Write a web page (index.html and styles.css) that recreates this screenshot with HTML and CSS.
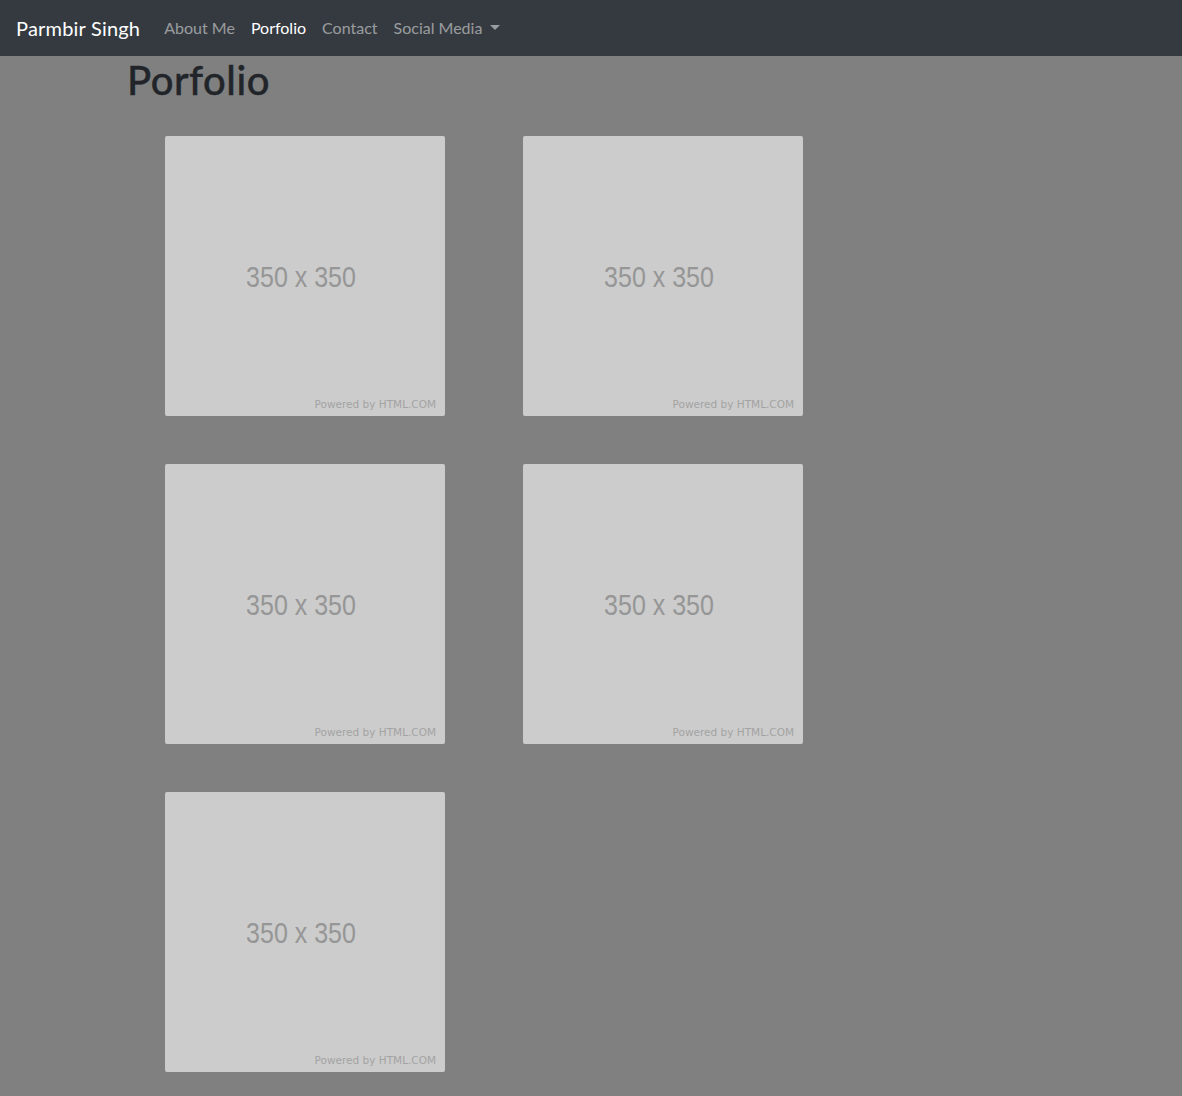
FILE: index.html
```html
<!DOCTYPE html>
<html lang="en">
<head>
<meta charset="utf-8">
<title>Porfolio</title>
<link rel="stylesheet" href="styles.css">
</head>
<body>
<nav class="navbar">
  <a class="brand" href="#">Parmbir Singh</a>
  <ul class="nav">
    <li><a class="nav-link" href="#">About Me</a></li>
    <li><a class="nav-link active" href="#">Porfolio</a></li>
    <li><a class="nav-link" href="#">Contact</a></li>
    <li><a class="nav-link dropdown" href="#">Social Media<span class="caret"></span></a></li>
  </ul>
</nav>
<main class="main">
  <h1 class="title">Porfolio</h1>
  <div class="gallery">
    <div class="ph"><span class="ph-size">350 x 350</span><span class="ph-credit">Powered by HTML.COM</span></div>
    <div class="ph"><span class="ph-size">350 x 350</span><span class="ph-credit">Powered by HTML.COM</span></div>
    <div class="ph"><span class="ph-size">350 x 350</span><span class="ph-credit">Powered by HTML.COM</span></div>
    <div class="ph"><span class="ph-size">350 x 350</span><span class="ph-credit">Powered by HTML.COM</span></div>
    <div class="ph"><span class="ph-size">350 x 350</span><span class="ph-credit">Powered by HTML.COM</span></div>
  </div>
</main>
</body>
</html>
```
FILE: styles.css
```css
* { box-sizing: border-box; }
html, body { margin: 0; }
body {
  background: #808080;
  font-family: Lato, "Noto Sans", sans-serif;
  color: #212529;
  font-size: 16px;
  line-height: 1.5;
}
.navbar {
  background: #343a40;
  height: 56px;
  padding: 8px 16px;
  display: flex;
  align-items: center;
}
.brand {
  color: #fff;
  text-decoration: none;
  font-size: 20px;
  line-height: 30px;
  padding: 5px 0;
  margin-right: 16px;
  letter-spacing: 0.2px;
}
.nav {
  list-style: none;
  margin: 0;
  padding: 0;
  display: flex;
}
.nav-link {
  display: flex;
  align-items: center;
  padding: 8px;
  color: rgba(255,255,255,.5);
  text-decoration: none;
}
.nav-link.active { color: #fff; }
.caret {
  display: inline-block;
  margin-left: 8px;
  width: 0;
  height: 0;
  border-top: 5px solid rgba(255,255,255,.5);
  border-left: 5px solid transparent;
  border-right: 5px solid transparent;
  margin-top: -2px;
}
.main {
  padding: 0 0 24px 127px;
}
.title {
  margin: 0 0 8px;
  font-size: 40px;
  font-weight: 500;
  line-height: 1.2;
  letter-spacing: 0.5px;
  -webkit-text-stroke: 0.4px #212529;
}
.gallery {
  margin: 32px 0 0 38px;
  display: grid;
  grid-template-columns: repeat(2, 280px);
  column-gap: 78px;
  row-gap: 48px;
}
.ph {
  width: 280px;
  height: 280px;
  background: #cccccc;
  border-radius: 2px;
  position: relative;
  display: flex;
  align-items: center;
  justify-content: center;
}
.ph-size {
  font-family: "Liberation Sans", Arial, sans-serif;
  font-size: 25px;
  color: #969696;
  transform: scaleY(1.2);
  margin-left: -8px;
  margin-top: 2px;
}
.ph-credit {
  position: absolute;
  right: 9px;
  bottom: 6px;
  font-family: "DejaVu Sans", sans-serif;
  font-size: 10.5px;
  color: #a3a3a3;
  line-height: 12px;
}
```
